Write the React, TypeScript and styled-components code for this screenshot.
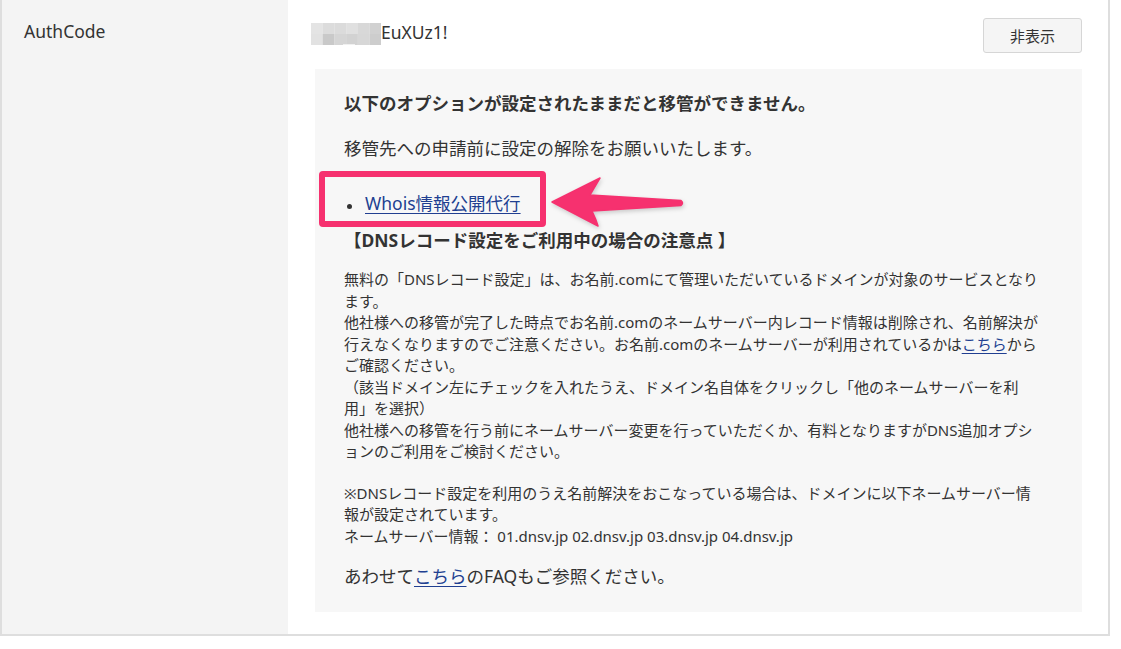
import React from 'react';
import styled, { createGlobalStyle } from 'styled-components';

const GlobalStyle = createGlobalStyle`
  html, body { margin: 0; padding: 0; background: #ffffff; }
  body {
    font-family: "Noto Sans", "Noto Sans CJK JP", sans-serif;
    color: #333333;
  }
`;

const Table = styled.div`
  width: 1110px;
  box-sizing: border-box;
  border-left: 2px solid #dedede;
  border-right: 2px solid #dedede;
  border-bottom: 2px solid #dedede;
`;

const Row = styled.div<{ $divider?: boolean; $height?: number }>`
  display: grid;
  grid-template-columns: 286px 1fr;
  border-top: ${(p) => (p.$divider ? '1px dotted #c6c6c6' : 'none')};
  height: ${(p) => (p.$height ? `${p.$height}px` : 'auto')};
`;

const LabelCell = styled.div`
  background: #f4f4f4;
  padding: 12px 0 0 22px;
  font-size: 17.5px;
  line-height: 26px;
  color: #333333;
`;

const ValueCell = styled.div`
  background: #ffffff;
  padding: 12px 26px 22px 23px;
`;

const ValueRow = styled.div`
  display: flex;
  justify-content: space-between;
  align-items: flex-start;
`;

const CodeText = styled.div`
  display: flex;
  align-items: center;
  margin-top: 1px;
  font-size: 17.5px;
  line-height: 26px;
  color: #333333;
`;

const Mosaic = styled.svg`
  display: block;
  width: 70px;
  height: 22px;
  margin-top: 3px;
`;

const HideButton = styled.button`
  width: 99px;
  height: 35px;
  box-sizing: border-box;
  background: #f5f5f5;
  border: 1px solid #d6d6d6;
  border-radius: 3px;
  font-family: "Noto Sans CJK JP", sans-serif;
  font-size: 15px;
  color: #333333;
  padding: 0;
  cursor: pointer;
`;

const Notice = styled.div`
  margin: 16px 0 0 4px;
  background: #f7f7f7;
  padding: 21px 28px 23px 29px;
`;

const NoticeTitle = styled.p`
  margin: 0;
  font-size: 17.5px;
  line-height: 26px;
  font-weight: 700;
  color: #333333;
`;

const NoticeText = styled.p<{ $gap: number }>`
  margin: ${(p) => p.$gap}px 0 0;
  font-size: 17.5px;
  line-height: 26px;
  color: #333333;
`;

const OptionList = styled.ul`
  list-style: none;
  margin: 29px 0 0;
  padding: 0;
`;

const OptionItem = styled.li`
  position: relative;
  padding-left: 21px;
  font-size: 17.5px;
  line-height: 26px;

  &::before {
    content: '';
    position: absolute;
    left: 3px;
    top: 14px;
    width: 5px;
    height: 5px;
    border-radius: 50%;
    background: #333333;
  }
`;

const Link = styled.a`
  color: #213f91;
  text-decoration: underline;
  text-underline-offset: 3px;
`;

const Highlight = styled.span`
  position: absolute;
  left: -25px;
  top: -19px;
  width: 227px;
  height: 56px;
  box-sizing: border-box;
  border: 6px solid #f6316f;
  border-radius: 4px;
  pointer-events: none;
`;

const Arrow = styled.svg`
  position: absolute;
  left: 206px;
  top: -14px;
  width: 136px;
  height: 54px;
  overflow: visible;
  filter: drop-shadow(1px 2px 2px rgba(0, 0, 0, 0.18));
`;

const CautionTitle = styled.p`
  margin: 11px 0 0;
  font-size: 17.5px;
  line-height: 26px;
  font-weight: 700;
  color: #333333;
`;

const SmallText = styled.p<{ $gap: number }>`
  margin: ${(p) => p.$gap}px 0 0;
  font-size: 15px;
  line-height: 21.5px;
  color: #333333;
  white-space: nowrap;
`;

const mosaicCells = [
  ['#e4e4e4', '#dcdcdc', '#dbdbdb', '#e0e0e0', '#d8d8d8', '#d1d1d1'],
  ['#e2e2e2', '#c9c9c9', '#d5d5d5', '#d2d2d2', '#d7d7d7', '#cdcdcd'],
];

export default function App() {
  return (
    <>
      <GlobalStyle />
      <Table>
        <Row $height={5}>
          <LabelCell />
          <ValueCell />
        </Row>
        <Row $divider>
          <LabelCell>AuthCode</LabelCell>
          <ValueCell>
            <ValueRow>
              <CodeText>
                <Mosaic viewBox="0 0 70 22">
                  {mosaicCells.map((row, r) =>
                    row.map((c, i) => (
                      <rect key={`${r}-${i}`} x={i * 11.7} y={r * 11} width={11.8} height={11} fill={c} />
                    ))
                  )}
                  <rect x="32" y="21" width="12" height="4" fill="#f0f0f0" />
                </Mosaic>
                EuXUz1!
              </CodeText>
              <HideButton>非表示</HideButton>
            </ValueRow>
            <Notice>
              <NoticeTitle>以下のオプションが設定されたままだと移管ができません。</NoticeTitle>
              <NoticeText $gap={19}>移管先への申請前に設定の解除をお願いいたします。</NoticeText>
              <OptionList>
                <OptionItem>
                  <Link href="#">Whois情報公開代行</Link>
                  <Highlight />
                  <Arrow viewBox="0 0 136 54">
                    <path
                      d="M2,26 L50,2 Q44,12 40,19 L131,24.5 Q134,27 131,29.5 L42,35 Q46,43 48,50 Z"
                      fill="#f6316f"
                      stroke="#f6316f"
                      strokeWidth="1.5"
                      strokeLinejoin="round"
                    />
                  </Arrow>
                </OptionItem>
              </OptionList>
              <CautionTitle>【DNSレコード設定をご利用中の場合の注意点 】</CautionTitle>
              <SmallText $gap={16}>
                無料の「DNSレコード設定」は、お名前.comにて管理いただいているドメインが対象のサービスとなり
                <br />
                ます。
                <br />
                他社様への移管が完了した時点でお名前.comのネームサーバー内レコード情報は削除され、名前解決が
                <br />
                行えなくなりますのでご注意ください。お名前.comのネームサーバーが利用されているかは
                <Link href="#">こちら</Link>から
                <br />
                ご確認ください。
                <br />
                （該当ドメイン左にチェックを入れたうえ、ドメイン名自体をクリックし「他のネームサーバーを利
                <br />
                用」を選択）
                <br />
                他社様への移管を行う前にネームサーバー変更を行っていただくか、有料となりますがDNS追加オプシ
                <br />
                ョンのご利用をご検討ください。
              </SmallText>
              <SmallText $gap={20}>
                ※DNSレコード設定を利用のうえ名前解決をおこなっている場合は、ドメインに以下ネームサーバー情
                <br />
                報が設定されています。
                <br />
                ネームサーバー情報： 01.dnsv.jp 02.dnsv.jp 03.dnsv.jp 04.dnsv.jp
              </SmallText>
              <NoticeText $gap={16}>
                あわせて<Link href="#">こちら</Link>のFAQもご参照ください。
              </NoticeText>
            </Notice>
          </ValueCell>
        </Row>
      </Table>
    </>
  );
}
